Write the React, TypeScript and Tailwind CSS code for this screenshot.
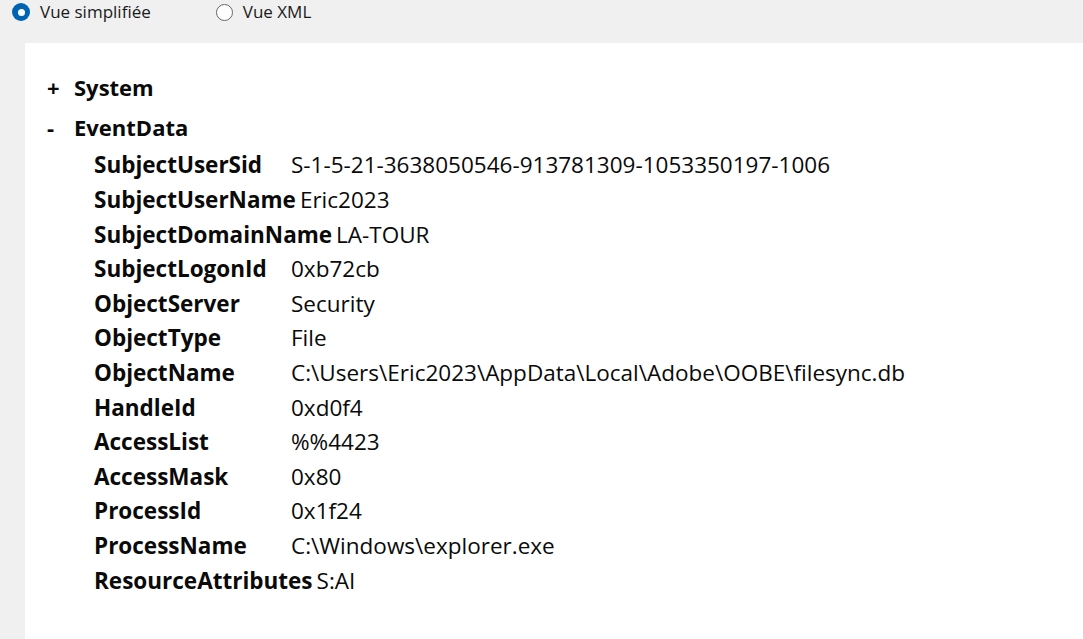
import React, { useState } from "react";

type Field = { name: string; value: string };

const fields: Field[] = [
  { name: "SubjectUserSid", value: "S-1-5-21-3638050546-913781309-1053350197-1006" },
  { name: "SubjectUserName", value: "Eric2023" },
  { name: "SubjectDomainName", value: "LA-TOUR" },
  { name: "SubjectLogonId", value: "0xb72cb" },
  { name: "ObjectServer", value: "Security" },
  { name: "ObjectType", value: "File" },
  { name: "ObjectName", value: "C:\\Users\\Eric2023\\AppData\\Local\\Adobe\\OOBE\\filesync.db" },
  { name: "HandleId", value: "0xd0f4" },
  { name: "AccessList", value: "%%4423" },
  { name: "AccessMask", value: "0x80" },
  { name: "ProcessId", value: "0x1f24" },
  { name: "ProcessName", value: "C:\\Windows\\explorer.exe" },
  { name: "ResourceAttributes", value: "S:AI" },
];

const Radio: React.FC<{ checked: boolean; label: string; onClick: () => void }> = ({ checked, label, onClick }) => (
  <button onClick={onClick} className="flex items-center gap-[10px] text-[17px] leading-[24px] text-[#1a1a1a]">
    {checked ? (
      <span className="w-[18px] h-[18px] rounded-full bg-[#0063b1] flex items-center justify-center">
        <span className="w-[7px] h-[7px] rounded-full bg-white" />
      </span>
    ) : (
      <span className="w-[17px] h-[17px] rounded-full border border-[#666] bg-white" />
    )}
    {label}
  </button>
);

export default function App() {
  const [mode, setMode] = useState<"simple" | "xml">("simple");

  return (
    <div
      className="w-full h-[639px] bg-[#f0f0f0] flex flex-col overflow-hidden"
      style={{ fontFamily: '"Open Sans", "Noto Sans", sans-serif' }}
    >
      {/* view toggle */}
      <div className="h-[43px] flex items-start pl-[12px] gap-[65px]">
        <Radio checked={mode === "simple"} label="Vue simplifiée" onClick={() => setMode("simple")} />
        <Radio checked={mode === "xml"} label="Vue XML" onClick={() => setMode("xml")} />
      </div>

      {/* details panel */}
      <div className="flex-1 ml-[25px] bg-white pt-[19px] pl-[22px] text-[#0a0a0a]">
        <div className="flex items-center h-[50px] font-bold text-[22px]">
          <span className="w-[27px]">+</span>
          <span>System</span>
        </div>
        <div className="flex items-center h-[30px] font-bold text-[22px]">
          <span className="w-[27px]">-</span>
          <span>EventData</span>
        </div>
        <div className="pl-[47px] pt-[6px]">
          {fields.map((f) => (
            <div key={f.name} className="flex items-center h-[34.6px] whitespace-nowrap">
              <span className="font-bold text-[22.5px] min-w-[197px] pr-[4px]">{f.name}</span>
              <span className="text-[22.5px]">{f.value}</span>
            </div>
          ))}
        </div>
      </div>
    </div>
  );
}
